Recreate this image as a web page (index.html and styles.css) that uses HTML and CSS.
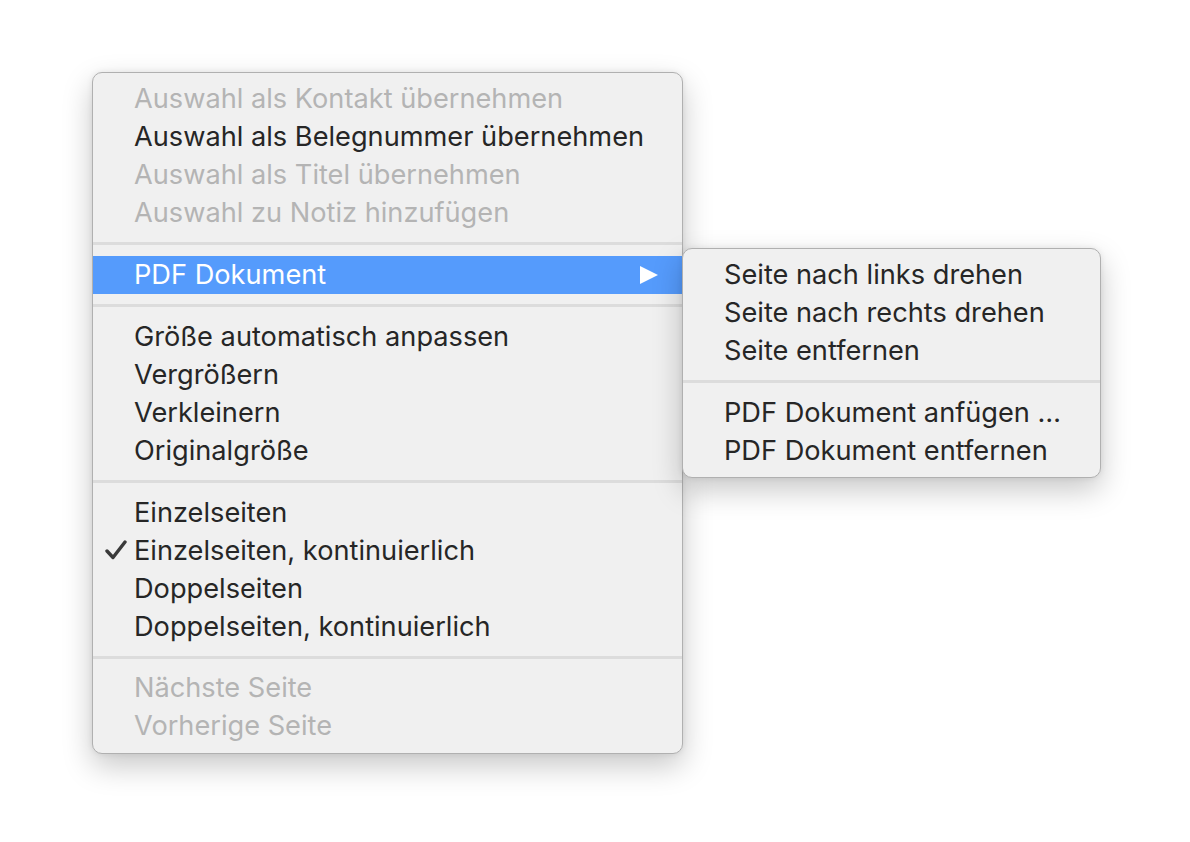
FILE: index.html
```html
<!DOCTYPE html>
<html lang="de">
<head>
<meta charset="utf-8">
<title>Kontextmenü</title>
<link rel="stylesheet" href="styles.css">
</head>
<body>
<div class="stage">
  <div class="menu main">
    <div class="item disabled">Auswahl als Kontakt übernehmen</div>
    <div class="item">Auswahl als Belegnummer übernehmen</div>
    <div class="item disabled">Auswahl als Titel übernehmen</div>
    <div class="item disabled">Auswahl zu Notiz hinzufügen</div>
    <div class="sep"></div>
    <div class="item active">PDF Dokument
      <svg class="arrow" viewBox="0 0 18 18" width="18" height="18"><path d="M0 0 L18 9 L0 18 Z" fill="#fff"/></svg>
    </div>
    <div class="sep"></div>
    <div class="item">Größe automatisch anpassen</div>
    <div class="item">Vergrößern</div>
    <div class="item">Verkleinern</div>
    <div class="item">Originalgröße</div>
    <div class="sep"></div>
    <div class="item">Einzelseiten</div>
    <div class="item checked">
      <svg class="check" viewBox="0 0 22 20" width="22" height="20"><path d="M2 11 L8 17.5 L20 2" fill="none" stroke="#3a3a3a" stroke-width="3.4" stroke-linecap="round" stroke-linejoin="round"/></svg>
      Einzelseiten, kontinuierlich</div>
    <div class="item">Doppelseiten</div>
    <div class="item">Doppelseiten, kontinuierlich</div>
    <div class="sep"></div>
    <div class="item disabled">Nächste Seite</div>
    <div class="item disabled">Vorherige Seite</div>
  </div>
  <div class="menu sub">
    <div class="item">Seite nach links drehen</div>
    <div class="item">Seite nach rechts drehen</div>
    <div class="item">Seite entfernen</div>
    <div class="sep"></div>
    <div class="item">PDF Dokument anfügen …</div>
    <div class="item">PDF Dokument entfernen</div>
  </div>
</div>
</body>
</html>
```
FILE: styles.css
```css
html, body {
  margin: 0;
  padding: 0;
  background: #ffffff;
}
body {
  width: 1190px;
  height: 842px;
  overflow: hidden;
  font-family: Inter, "Liberation Sans", sans-serif;
}
.stage {
  position: relative;
  padding: 72px 0 0 92px;
}
.menu {
  box-sizing: border-box;
  background: #f0f0f0;
  border: 1px solid #b0b0b0;
  border-radius: 10px;
  box-shadow: 0 12px 30px rgba(0,0,0,0.22), 0 0 6px rgba(0,0,0,0.08);
  padding: 7px 0 8px;
  display: flex;
  flex-direction: column;
}
.main {
  width: 591px;
  height: 682px;
}
.sub {
  position: absolute;
  left: 682px;
  top: 248px;
  width: 419px;
  height: 230px;
}
.item {
  position: relative;
  height: 38px;
  display: flex;
  align-items: center;
  padding-left: 41px;
  font-size: 27.2px;
  color: #262626;
  white-space: nowrap;
  letter-spacing: 0;
  line-height: 1;
}
.item.disabled {
  color: #b4b4b4;
}
.item.active {
  background: #559bfc;
  color: #ffffff;
}
.arrow {
  position: absolute;
  left: 547px;
  top: 10px;
}
.check {
  position: absolute;
  left: 12px;
  top: 9px;
}
.sep {
  height: 24px;
  display: flex;
  align-items: center;
}
.sep::before {
  content: "";
  display: block;
  width: 100%;
  height: 3px;
  background: #dcdcdc;
}
```
